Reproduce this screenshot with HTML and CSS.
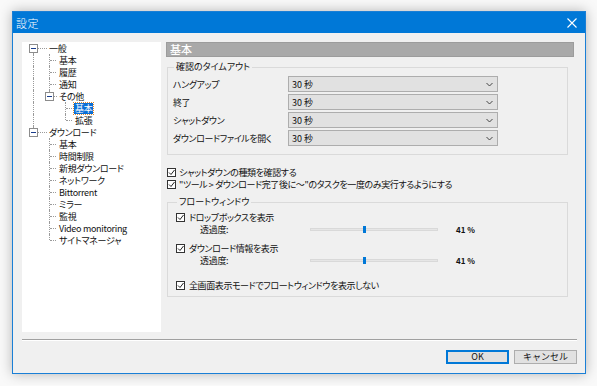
FILE: index.html
```html
<!DOCTYPE html>
<html>
<head>
    <link rel="stylesheet" href="styles.css">
</head>
<body>
    <div class="window">
        <div class="titlebar">
            <span class="title">設定</span>
            <svg class="close" width="10" height="10" viewBox="0 0 10 10"><path d="M0.5 0.5 L9.5 9.5 M9.5 0.5 L0.5 9.5" stroke="#fff" stroke-width="1.1"/></svg>
        </div>

        <div class="main">
            <!-- tree -->
            <div class="tree">
                <div class="row">
                    <span class="g root first"><span class="box"></span></span>
                    <span class="label">一般</span>
                </div>
                <div class="row"><span class="g c0 pipe"></span><span class="g c1 tee"></span><span class="label">基本</span></div>
                <div class="row"><span class="g c0 pipe"></span><span class="g c1 tee"></span><span class="label">履歴</span></div>
                <div class="row"><span class="g c0 pipe"></span><span class="g c1 tee"></span><span class="label">通知</span></div>
                <div class="row"><span class="g c0 pipe"></span><span class="g c1 end boxed"><span class="box"></span></span><span class="label">その他</span></div>
                <div class="row"><span class="g c0 pipe"></span><span class="g c1"></span><span class="g c2 tee"></span><span class="label selected">基本</span></div>
                <div class="row"><span class="g c0 pipe"></span><span class="g c1"></span><span class="g c2 end"></span><span class="label">拡張</span></div>
                <div class="row">
                    <span class="g root last"><span class="box"></span></span>
                    <span class="label">ダウンロード</span>
                </div>
                <div class="row"><span class="g c0"></span><span class="g c1 tee"></span><span class="label">基本</span></div>
                <div class="row"><span class="g c0"></span><span class="g c1 tee"></span><span class="label">時間制限</span></div>
                <div class="row"><span class="g c0"></span><span class="g c1 tee"></span><span class="label">新規ダウンロード</span></div>
                <div class="row"><span class="g c0"></span><span class="g c1 tee"></span><span class="label">ネットワーク</span></div>
                <div class="row"><span class="g c0"></span><span class="g c1 tee"></span><span class="label">Bittorrent</span></div>
                <div class="row"><span class="g c0"></span><span class="g c1 tee"></span><span class="label">ミラー</span></div>
                <div class="row"><span class="g c0"></span><span class="g c1 tee"></span><span class="label">監視</span></div>
                <div class="row"><span class="g c0"></span><span class="g c1 tee"></span><span class="label">Video monitoring</span></div>
                <div class="row"><span class="g c0"></span><span class="g c1 end"></span><span class="label">サイトマネージャ</span></div>
            </div>

            <!-- settings -->
            <div class="panel">
                <div class="section-title">基本</div>

                <fieldset class="group timeouts">
                    <legend>確認のタイムアウト</legend>
                    <div class="field">
                        <span class="field-label">ハングアップ</span>
                        <div class="select">30 秒<svg width="7" height="5" viewBox="0 0 7 5"><path d="M0.5 1 L3.5 4 L6.5 1" fill="none" stroke="#444" stroke-width="1"/></svg></div>
                    </div>
                    <div class="field">
                        <span class="field-label">終了</span>
                        <div class="select">30 秒<svg width="7" height="5" viewBox="0 0 7 5"><path d="M0.5 1 L3.5 4 L6.5 1" fill="none" stroke="#444" stroke-width="1"/></svg></div>
                    </div>
                    <div class="field">
                        <span class="field-label">シャットダウン</span>
                        <div class="select">30 秒<svg width="7" height="5" viewBox="0 0 7 5"><path d="M0.5 1 L3.5 4 L6.5 1" fill="none" stroke="#444" stroke-width="1"/></svg></div>
                    </div>
                    <div class="field">
                        <span class="field-label">ダウンロードファイルを開く</span>
                        <div class="select">30 秒<svg width="7" height="5" viewBox="0 0 7 5"><path d="M0.5 1 L3.5 4 L6.5 1" fill="none" stroke="#444" stroke-width="1"/></svg></div>
                    </div>
                </fieldset>

                <div class="checks">
                    <div class="check"><span class="cb"><svg width="7" height="7" viewBox="0 0 7 7"><path d="M1 3.5 L3 5.5 L6.5 1" fill="none" stroke="#222" stroke-width="1"/></svg></span>シャットダウンの種類を確認する</div>
                    <div class="check"><span class="cb"><svg width="7" height="7" viewBox="0 0 7 7"><path d="M1 3.5 L3 5.5 L6.5 1" fill="none" stroke="#222" stroke-width="1"/></svg></span>"ツール &gt; ダウンロード完了後に～"のタスクを一度のみ実行するようにする</div>
                </div>

                <fieldset class="group float">
                    <legend>フロートウィンドウ</legend>
                    <div class="check sub"><span class="cb"><svg width="7" height="7" viewBox="0 0 7 7"><path d="M1 3.5 L3 5.5 L6.5 1" fill="none" stroke="#222" stroke-width="1"/></svg></span>ドロップボックスを表示</div>
                    <div class="slider-row">
                        <span class="slider-label">透過度:</span>
                        <div class="track"><span class="thumb" style="left: 41%"></span></div>
                        <span class="value">41 %</span>
                    </div>
                    <div class="check sub gap"><span class="cb"><svg width="7" height="7" viewBox="0 0 7 7"><path d="M1 3.5 L3 5.5 L6.5 1" fill="none" stroke="#222" stroke-width="1"/></svg></span>ダウンロード情報を表示</div>
                    <div class="slider-row">
                        <span class="slider-label">透過度:</span>
                        <div class="track"><span class="thumb" style="left: 41%"></span></div>
                        <span class="value">41 %</span>
                    </div>
                    <div class="check sub last"><span class="cb"><svg width="7" height="7" viewBox="0 0 7 7"><path d="M1 3.5 L3 5.5 L6.5 1" fill="none" stroke="#222" stroke-width="1"/></svg></span>全画面表示モードでフロートウィンドウを表示しない</div>
                </fieldset>
            </div>
        </div>

        <div class="separator"></div>

        <div class="buttons">
            <button class="default">OK</button>
            <button>キャンセル</button>
        </div>
    </div>
</body>
</html>
```

FILE: styles.css
```css
body {
    margin: 0;
    padding: 11px 12px;
    background: #f9f9f9;
    font-family: "Noto Sans CJK JP", "Noto Sans", sans-serif;
    font-size: 9px;
    color: #111;
    font-feature-settings: "palt";
}
.window {
    width: 574px;
    height: 363px;
    box-sizing: border-box;
    border: 1px solid #1a7fd6;
    background: #f0f0f0;
    box-shadow: 0 0 12px rgba(0, 0, 0, 0.28);
}
.titlebar {
    height: 21px;
    background: #0078d7;
    color: #fff;
    display: flex;
    align-items: center;
    justify-content: space-between;
    padding: 0 8px 0 3px;
}
.title { font-size: 11px; letter-spacing: 0.5px; font-weight: 300; }
.main {
    display: flex;
    padding: 9px 0 0 9px;
}

/* tree */
.tree {
    width: 139px;
    height: 290px;
    background: #fff;
    box-sizing: border-box;
}
.row {
    display: flex;
    height: 12px;
    align-items: center;
    letter-spacing: -0.3px;
}
.g {
    flex: none;
    height: 12px;
    position: relative;
}
.g::before, .g::after {
    content: "";
    position: absolute;
}
.root { width: 26px; }
.c0 { width: 20px; }
.c1 { width: 16px; }
.c2 { width: 17px; }
.pipe::before, .tee::before {
    left: 11px; top: 0; bottom: 0;
    border-left: 1px dotted #9a9a9a;
}
.c1.tee::before, .c1.end::before { left: 7px; }
.c2.tee::before, .c2.end::before { left: 7px; }
.end::before {
    top: 0; height: 6px;
    border-left: 1px dotted #9a9a9a;
}
.tee::after, .end::after {
    left: 8px; width: 6px; top: 6px;
    border-top: 1px dotted #9a9a9a;
}
.root::after {
    left: 16px; width: 9px; top: 6px;
    border-top: 1px dotted #9a9a9a;
}
.root.first::before {
    left: 11px; top: 9px; bottom: 0;
    border-left: 1px dotted #9a9a9a;
}
.root.last::before {
    left: 11px; top: 0; height: 2px;
    border-left: 1px dotted #9a9a9a;
}
.c1.boxed::before { height: 2px; }
.c1.boxed::after { left: 12px; width: 3px; }
.box {
    position: absolute;
    left: 7px; top: 2px;
    width: 7px; height: 7px;
    border: 1px solid #8c8c8c;
    background: #fff;
}
.box::after {
    content: "";
    position: absolute;
    left: 1px; right: 1px; top: 3px;
    border-top: 1px solid #1a3d8c;
}
.c1.boxed .box { left: 3px; }
.label { padding: 0 1px; line-height: 11px; white-space: nowrap; }
.c2 + .label { margin-left: -1px; }
.selected {
    background: #0a6fd6;
    color: #fff;
    outline: 1px dotted #e08a2c;
}

/* settings panel */
.panel {
    width: 408px;
    margin-left: 5px;
}
.section-title {
    height: 15px;
    box-sizing: border-box;
    background: #a9a9a9;
    border: 1px solid #9c9c9c;
    color: #fff;
    font-size: 11px;
    font-weight: 500;
    line-height: 13px;
    padding-left: 3px;
}
.group {
    margin: 4px 0 0 1px;
    width: 401px;
    box-sizing: border-box;
    border: 1px solid #dadada;
    padding: 0 0 0 5px;
    min-width: 0;
}
.group legend {
    padding: 0 2px;
    margin-left: 1px;
    line-height: 12px;
    font-size: 9px;
}
.timeouts {
    height: 94px;
    padding-top: 3px;
}
.field {
    display: flex;
    align-items: center;
    height: 16px;
    margin-bottom: 2px;
}
.field-label {
    width: 115px;
    letter-spacing: -0.4px;
    white-space: nowrap;
}
.select {
    width: 210px;
    height: 16px;
    box-sizing: border-box;
    border: 1px solid #adadad;
    background: #e1e1e1;
    display: flex;
    align-items: center;
    justify-content: space-between;
    padding: 0 4px 0 3px;
    font-size: 9px;
}
.checks {
    margin: 11px 0 0 1px;
}
.check {
    display: flex;
    align-items: center;
    height: 12px;
    white-space: nowrap;
    letter-spacing: -0.4px;
}
.cb {
    flex: none;
    width: 7px;
    height: 7px;
    border: 1px solid #333;
    background: #fff;
    margin-right: 3px;
    display: flex;
    align-items: center;
    justify-content: center;
}
.float {
    margin-top: 6px;
    padding: 3px 0 5px 8px;
}
.check.sub .cb { margin-right: 4px; }
.check.gap { margin-top: 7px; }
.check.last { margin-top: 13px; }
.slider-row {
    display: flex;
    align-items: center;
    height: 12px;
    padding-left: 24px;
}
.slider-label { width: 110px; letter-spacing: -0.3px; }
.track {
    width: 128px;
    height: 3px;
    background: #e6e6e6;
    border: 1px solid #d9d9d9;
    box-sizing: border-box;
    position: relative;
}
.thumb {
    position: absolute;
    top: -3px;
    width: 3px;
    height: 7px;
    background: #0078d7;
}
.value {
    margin-left: 18px;
    font-size: 8px;
    font-weight: bold;
}

/* footer */
.separator {
    margin: 7px 8px 0 9px;
    border-top: 1px solid #a0a0a0;
    border-bottom: 1px solid #fff;
}
.buttons {
    display: flex;
    justify-content: flex-end;
    gap: 5px;
    padding: 9px 8px 0 0;
}
button {
    width: 63px;
    height: 14px;
    box-sizing: border-box;
    border: 1px solid #adadad;
    background: #e1e1e1;
    font-family: "Noto Sans CJK JP", "Noto Sans", sans-serif;
    font-size: 9px;
    padding: 0;
    line-height: 12px;
    color: #111;
}
button.default {
    border: 1px solid #0078d7;
    box-shadow: inset 0 0 0 1px #0078d7;
}
```
